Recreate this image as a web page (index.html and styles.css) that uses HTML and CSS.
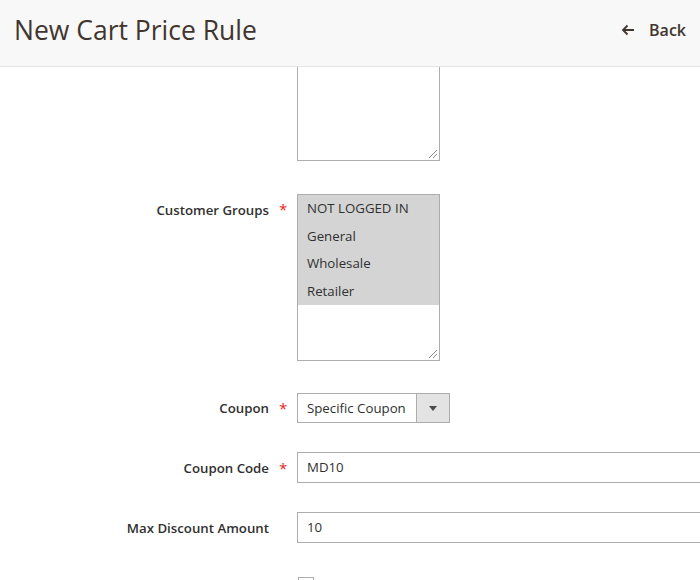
FILE: index.html
```html
<!DOCTYPE html>
<html>
<head>
<meta charset="utf-8">
<link rel="stylesheet" href="styles.css">
</head>
<body>
<header class="page-header">
  <h1 class="page-title">New Cart Price Rule</h1>
  <a class="back-btn" href="#">
    <svg class="back-icon" width="14" height="12" viewBox="0 0 14 12"><path d="M13 6H2M6.5 1.5L2 6l4.5 4.5" fill="none" stroke="#41362f" stroke-width="1.8"/></svg>
    <span>Back</span>
  </a>
</header>
<main class="form">
  <div class="row row-textarea">
    <div class="label"></div>
    <div class="req"></div>
    <div class="textarea-cut"><span class="grip"></span></div>
  </div>
  <div class="row row-groups">
    <div class="label">Customer Groups</div>
    <div class="req">*</div>
    <div class="multiselect">
      <div class="opt">NOT LOGGED IN</div>
      <div class="opt">General</div>
      <div class="opt">Wholesale</div>
      <div class="opt">Retailer</div>
      <span class="grip"></span>
    </div>
  </div>
  <div class="row row-coupon">
    <div class="label">Coupon</div>
    <div class="req">*</div>
    <div class="select">
      <span class="select-value">Specific Coupon</span>
      <span class="select-btn"><span class="tri"></span></span>
    </div>
  </div>
  <div class="row row-input">
    <div class="label">Coupon Code</div>
    <div class="req">*</div>
    <div class="input">MD10</div>
  </div>
  <div class="row row-input">
    <div class="label">Max Discount Amount</div>
    <div class="req"></div>
    <div class="input">10</div>
  </div>
  <div class="row row-check">
    <div class="label"></div>
    <div class="req"></div>
    <div class="checkbox"></div>
  </div>
</main>
</body>
</html>
```
FILE: styles.css
```css
html, body {
  margin: 0;
  padding: 0;
  background: #ffffff;
  font-family: "Open Sans", "DejaVu Sans", sans-serif;
  color: #303030;
  overflow: hidden;
}
.page-header {
  height: 66px;
  background: #f8f8f8;
  border-bottom: 1px solid #e3e3e3;
  display: flex;
  align-items: center;
  justify-content: space-between;
  padding: 0 14px 0 14px;
  box-sizing: content-box;
}
.page-title {
  margin: 0;
  font-size: 26.5px;
  font-weight: 400;
  color: #41362f;
  position: relative;
  top: -3px;
}
.back-btn {
  display: flex;
  align-items: center;
  gap: 14px;
  color: #41362f;
  text-decoration: none;
  font-size: 16px;
  font-weight: 600;
  position: relative;
  top: -3px;
}
.back-icon { display: block; }
.form { display: flex; flex-direction: column; }
.row {
  display: flex;
  align-items: flex-start;
}
.label {
  width: 269px;
  flex: none;
  text-align: right;
  font-size: 13.25px;
  font-weight: 600;
  color: #303030;
}
.req {
  width: 28px;
  flex: none;
  color: #e22626;
  font-size: 15px;
  padding-left: 10px;
  box-sizing: border-box;
}
.grip {
  position: absolute;
  right: 2px;
  bottom: 2px;
  width: 8px;
  height: 8px;
  background: linear-gradient(135deg, transparent 45%, #8a8a8a 45%, #8a8a8a 55%, transparent 55%, transparent 70%, #8a8a8a 70%, #8a8a8a 80%, transparent 80%);
}
.textarea-cut {
  position: relative;
  width: 143px;
  height: 94px;
  border: 1px solid #adadad;
  border-top: none;
  box-sizing: border-box;
  background: #fff;
}
.row-groups { margin-top: 33px; }
.row-groups .label { padding-top: 7px; }
.row-groups .req { padding-top: 5px; }
.multiselect {
  position: relative;
  width: 143px;
  height: 167px;
  border: 1px solid #adadad;
  box-sizing: border-box;
  background: #fff;
  font-size: 13.25px;
  color: #303030;
}
.opt {
  height: 27.5px;
  line-height: 27.5px;
  padding-left: 9px;
  background: #d4d4d4;
}
.row-coupon { margin-top: 32px; align-items: center; }
.select {
  display: flex;
  width: 153px;
  height: 30px;
  border: 1px solid #adadad;
  box-sizing: border-box;
  background: #fff;
  font-size: 13.25px;
}
.select-value {
  flex: 1;
  padding-left: 9px;
  line-height: 28px;
}
.select-btn {
  width: 32px;
  border-left: 1px solid #adadad;
  background: #e3e3e3;
  display: flex;
  align-items: center;
  justify-content: center;
}
.tri {
  width: 0;
  height: 0;
  border-left: 4px solid transparent;
  border-right: 4px solid transparent;
  border-top: 5px solid #514943;
}
.row-input { margin-top: 29px; align-items: center; }
.input {
  width: 500px;
  flex: none;
  height: 31px;
  border: 1px solid #adadad;
  box-sizing: border-box;
  padding-left: 9px;
  line-height: 29px;
  font-size: 13.25px;
  color: #303030;
}
.row-check { margin-top: 34px; }
.checkbox {
  margin-left: 1px;
  width: 16px;
  height: 16px;
  border: 1px solid #adadad;
  box-sizing: border-box;
}
```
